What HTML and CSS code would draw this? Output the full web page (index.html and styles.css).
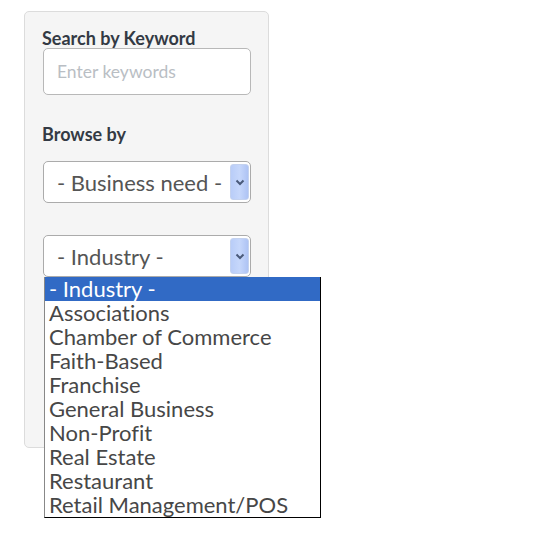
FILE: index.html
```html
<!DOCTYPE html>
<html>
<head>
<meta charset="utf-8">
<link rel="stylesheet" href="styles.css">
</head>
<body>
<div class="panel">
  <div class="label">Search by Keyword</div>
  <div class="input"><span class="placeholder">Enter keywords</span></div>
  <div class="label browse">Browse by</div>
  <div class="select first">
    <span class="value">- Business need -</span>
    <span class="arrow"><svg width="10" height="7" viewBox="0 0 10 7"><path d="M1.5 1.5 L5 5 L8.5 1.5" fill="none" stroke="#4a5a7a" stroke-width="2"/></svg></span>
  </div>
  <div class="select-wrap">
    <div class="select">
      <span class="value">- Industry -</span>
      <span class="arrow"><svg width="10" height="7" viewBox="0 0 10 7"><path d="M1.5 1.5 L5 5 L8.5 1.5" fill="none" stroke="#4a5a7a" stroke-width="2"/></svg></span>
    </div>
    <ul class="list">
      <li class="selected">- Industry -</li>
      <li>Associations</li>
      <li>Chamber of Commerce</li>
      <li>Faith-Based</li>
      <li>Franchise</li>
      <li>General Business</li>
      <li>Non-Profit</li>
      <li>Real Estate</li>
      <li>Restaurant</li>
      <li>Retail Management/POS</li>
    </ul>
  </div>
</div>
</body>
</html>
```
FILE: styles.css
```css
html, body {
  margin: 0;
  padding: 0;
  background: #fff;
}
html {
  min-height: 100%;
}
body {
  min-height: 550px;
  box-sizing: border-box;
  padding: 11px 0 0 24px;
  font-family: "Lato", "Open Sans", sans-serif;
  font-variant-ligatures: none;
}
.panel {
  box-sizing: border-box;
  width: 245px;
  height: 437px;
  background: #f5f5f5;
  border: 1px solid #dcdcdc;
  border-radius: 5px;
  padding: 16px 17px 0 17px;
}
.label {
  font-weight: 700;
  font-size: 18px;
  line-height: 20px;
  color: #333a44;
}
.input {
  box-sizing: border-box;
  margin-left: 1px;
  width: 208px;
  height: 47px;
  background: #fff;
  border: 1px solid #b8b8b8;
  border-radius: 5px;
  display: flex;
  align-items: center;
  padding-left: 13px;
}
.placeholder {
  font-family: "Lato", sans-serif;
  font-size: 17.5px;
  color: #b9bec4;
}
.browse {
  margin-top: 29px;
}
.select {
  box-sizing: border-box;
  margin-left: 1px;
  width: 208px;
  height: 42px;
  background: #fff;
  border: 1px solid #ababab;
  border-radius: 5px;
  display: flex;
  align-items: center;
  justify-content: space-between;
  padding: 2px 1px 2px 13px;
}
.select.first {
  margin-top: 17px;
}
.select-wrap {
  position: relative;
  margin-top: 32px;
}
.value {
  font-family: "Lato", sans-serif;
  font-size: 22px;
  color: #555;
}
.arrow {
  box-sizing: border-box;
  width: 19px;
  height: 100%;
  border-radius: 3px;
  background: linear-gradient(to right, #b9cdf8, #c6d7fb 50%, #aec3f4);
  border: 1px solid #c4d2ef;
  display: flex;
  align-items: center;
  justify-content: center;
}
.list {
  position: absolute;
  left: 2px;
  top: 42px;
  z-index: 2;
  box-sizing: border-box;
  width: 277px;
  margin: 0;
  padding: 0;
  list-style: none;
  background: #fff;
  border: 1px solid #000;
  border-top: 0;
  border-left-color: #888;
}
.list li {
  font-family: "Lato", sans-serif;
  font-size: 22px;
  line-height: 24px;
  height: 24px;
  padding-left: 4px;
  color: #474747;
  white-space: nowrap;
}
.list li.selected {
  background: #316ac5;
  color: #fff;
}
```
